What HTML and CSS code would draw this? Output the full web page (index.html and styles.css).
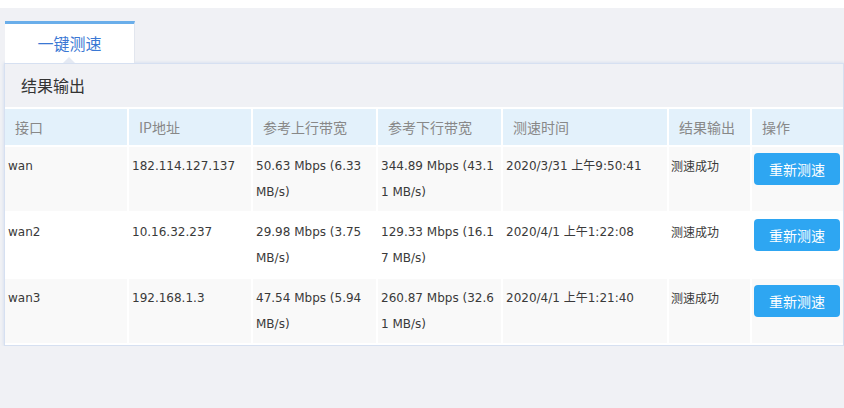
FILE: index.html
```html
<!DOCTYPE html>
<html lang="zh-CN">
<head>
    <meta charset="UTF-8">
    <title>一键测速</title>
    <link rel="stylesheet" href="styles.css">
</head>
<body>
    <div class="topbar"></div>
    <div id="outer">
        <div class="tabs">
            <div class="tab active">一键测速</div>
        </div>
        <div class="panel">
            <div class="panel-head">结果输出</div>
            <table class="main">
                <col class="c1">
                <col class="c2">
                <col class="c3">
                <col class="c4">
                <col class="c5">
                <col class="c6">
                <col class="c7">
                <tr>
                    <th>接口</th>
                    <th>IP地址</th>
                    <th>参考上行带宽</th>
                    <th>参考下行带宽</th>
                    <th>测速时间</th>
                    <th>结果输出</th>
                    <th>操作</th>
                </tr>
                <tr class="odd">
                    <td>wan</td>
                    <td>182.114.127.137</td>
                    <td>50.63 Mbps (6.33 MB/s)</td>
                    <td>344.89 Mbps (43.11 MB/s)</td>
                    <td>2020/3/31 上午9:50:41</td>
                    <td>测速成功</td>
                    <td><button type="button">重新测速</button></td>
                </tr>
                <tr>
                    <td>wan2</td>
                    <td>10.16.32.237</td>
                    <td>29.98 Mbps (3.75 MB/s)</td>
                    <td>129.33 Mbps (16.17 MB/s)</td>
                    <td>2020/4/1 上午1:22:08</td>
                    <td>测速成功</td>
                    <td><button type="button">重新测速</button></td>
                </tr>
                <tr class="odd">
                    <td>wan3</td>
                    <td>192.168.1.3</td>
                    <td>47.54 Mbps (5.94 MB/s)</td>
                    <td>260.87 Mbps (32.61 MB/s)</td>
                    <td>2020/4/1 上午1:21:40</td>
                    <td>测速成功</td>
                    <td><button type="button">重新测速</button></td>
                </tr>
            </table>
        </div>
    </div>
</body>
</html>
```

FILE: styles.css
```css
body {
    margin: 0;
    background: #f0f1f5;
    font-family: "DejaVu Sans", "Noto Sans CJK SC", sans-serif;
    color: #333;
}
.topbar {
    height: 8px;
    background: #fff;
}
#outer {
    padding: 13px 0 0 4px;
}
.tabs {
    display: flex;
    padding-left: 1px;
}
.tab {
    position: relative;
    width: 129px;
    height: 39px;
    line-height: 39px;
    text-align: center;
    background: #fff;
    border-top: 3px solid #6aaeea;
    border-right: 1px solid #e2e6ee;
    color: #3a78d4;
    font-size: 16px;
    font-family: "Noto Sans CJK SC", sans-serif;
}
.tab::after {
    content: "";
    position: absolute;
    left: 58px;
    bottom: 0;
    border: 6px solid transparent;
    border-bottom-color: #e4e9f3;
    border-top: 0;
}
.panel {
    background: #fff;
    border: 1px solid #d6e0f1;
    box-shadow: 0 0 3px rgba(110, 150, 210, 0.25);
}
.panel-head {
    height: 43px;
    line-height: 43px;
    padding-left: 16px;
    background: #f0f1f5;
    font-size: 16px;
    font-family: "Noto Sans CJK SC", sans-serif;
    color: #333;
}
.main {
    table-layout: fixed;
    width: calc(100% + 2px);
    margin: 0 0 0 -2px;
    border-collapse: separate;
    border-spacing: 2px;
}
.c1 { width: 122px; }
.c2 { width: 122px; }
.c3 { width: 123px; }
.c4 { width: 123px; }
.c5 { width: 164px; }
.c6 { width: 81px; }
.c7 { width: 91px; }
.main th {
    height: 36px;
    padding: 0 0 0 10px;
    background: #e3f1fb;
    color: #888;
    font-size: 14px;
    font-weight: normal;
    text-align: left;
    font-family: "Noto Sans CJK SC", sans-serif;
}
.main td {
    height: 52px;
    padding: 6px 3px;
    vertical-align: top;
    font-size: 12px;
    line-height: 26px;
    word-break: break-all;
    background: #fff;
    color: #3a3a3a;
}
.main tr.odd td {
    background: #f9f9f9;
}
.main td:nth-child(6) {
    padding-left: 2px;
    font-family: "Noto Sans CJK SC", sans-serif;
}
.main td:last-child {
    padding: 6px 2px;
}
.main button {
    width: 86px;
    height: 32px;
    border: none;
    border-radius: 4px;
    background: #2ea6f2;
    color: #fff;
    font-size: 14px;
    font-family: "Noto Sans CJK SC", sans-serif;
    cursor: pointer;
}
.main button:hover {
    background: #1b93e0;
}
```
